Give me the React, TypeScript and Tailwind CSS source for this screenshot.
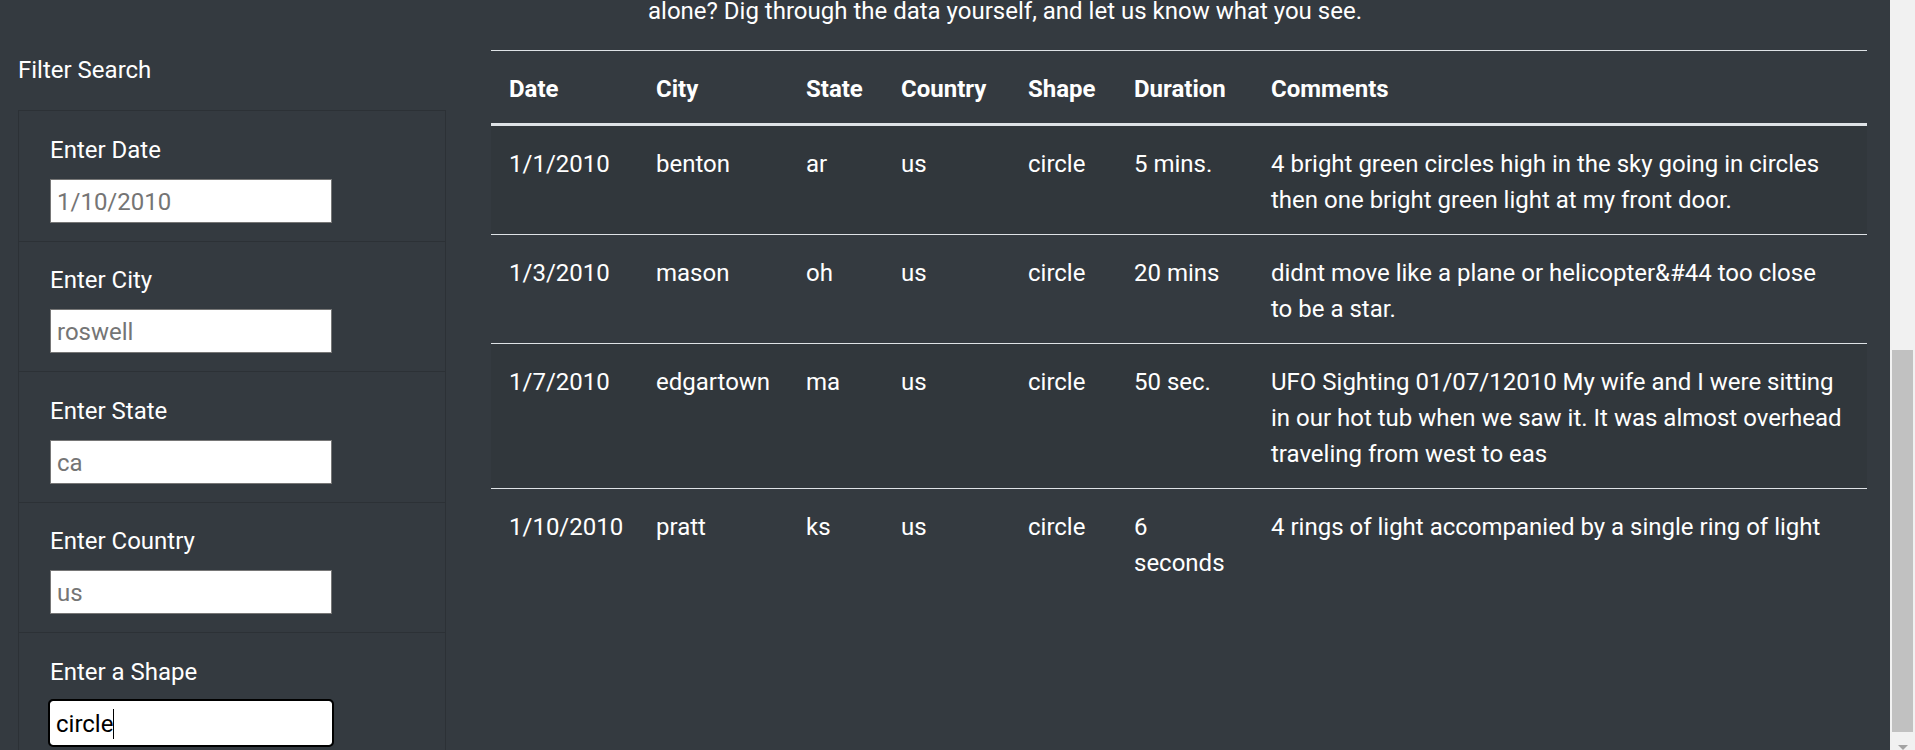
import React from 'react';

interface Sighting {
    date: string;
    city: string;
    state: string;
    country: string;
    shape: string;
    duration: string;
    comments: string;
}

const sightings: Sighting[] = [
    { date: '1/1/2010', city: 'benton', state: 'ar', country: 'us', shape: 'circle', duration: '5 mins.', comments: '4 bright green circles high in the sky going in circles then one bright green light at my front door.' },
    { date: '1/3/2010', city: 'mason', state: 'oh', country: 'us', shape: 'circle', duration: '20 mins', comments: 'didnt move like a plane or helicopter&#44 too close to be a star.' },
    { date: '1/7/2010', city: 'edgartown', state: 'ma', country: 'us', shape: 'circle', duration: '50 sec.', comments: 'UFO Sighting 01/07/12010 My wife and I were sitting in our hot tub when we saw it. It was almost overhead traveling from west to eas' },
    { date: '1/10/2010', city: 'pratt', state: 'ks', country: 'us', shape: 'circle', duration: '6 seconds', comments: '4 rings of light accompanied by a single ring of light' },
];

const filters = [
    { label: 'Enter Date', placeholder: '1/10/2010' },
    { label: 'Enter City', placeholder: 'roswell' },
    { label: 'Enter State', placeholder: 'ca' },
    { label: 'Enter Country', placeholder: 'us' },
];

const headers = ['Date', 'City', 'State', 'Country', 'Shape', 'Duration', 'Comments'];

export default function App() {
    return (
        <div className="flex h-[750px] w-full overflow-hidden bg-[#343a40] text-white text-[24px] leading-[36px] font-['Roboto','Liberation_Sans',sans-serif]">
            <div className="flex-1 min-w-0">
                {/* tail of the intro paragraph, page is scrolled */}
                <p className="-mt-[7px] pl-[648px]">alone? Dig through the data yourself, and let us know what you see.</p>

                <div className="mt-[21px] flex">
                    {/* Filters */}
                    <aside className="w-[491px] shrink-0 pl-[18px]">
                        <h5 className="pt-[2px] mb-[22px]">Filter Search</h5>
                        <ul className="w-[428px] border border-[#2c3136] divide-y divide-[#2c3136]">
                            {filters.map((f) => (
                                <li key={f.label} className="px-[31px] pt-[20.5px] pb-[18px]">
                                    <label className="block mb-[11px]">{f.label}</label>
                                    <input
                                        type="text"
                                        placeholder={f.placeholder}
                                        className="block h-[44px] w-[282px] bg-white border border-[#767676] px-[6px] pt-[2px] text-black placeholder:text-[#757575] outline-none"
                                    />
                                </li>
                            ))}
                            <li className="px-[31px] pt-[20.5px] pb-[18px]">
                                <label className="block mb-[11px]">Enter a Shape</label>
                                <div className="flex h-[44px] w-[282px] items-center rounded-[3px] border border-white bg-white px-[5px] pt-[2px] text-black outline-2 outline-black">
                                    <span>circle</span>
                                    <span className="h-[30px] w-px bg-black" />
                                </div>
                            </li>
                        </ul>
                    </aside>

                    {/* Results table */}
                    <div className="w-[1376px] shrink-0">
                        <table className="w-full table-fixed border-collapse text-left">
                            <colgroup>
                                <col className="w-[147px]" />
                                <col className="w-[150px]" />
                                <col className="w-[95px]" />
                                <col className="w-[127px]" />
                                <col className="w-[106px]" />
                                <col className="w-[137px]" />
                                <col />
                            </colgroup>
                            <thead>
                                <tr>
                                    {headers.map((h) => (
                                        <th key={h} className="border-t border-b-[3px] border-[#dee2e6] px-[18px] pt-[20px] pb-[16px] font-bold align-bottom">{h}</th>
                                    ))}
                                </tr>
                            </thead>
                            <tbody>
                                {sightings.map((s, i) => (
                                    <tr key={s.date} className={i % 2 === 0 ? 'bg-black/5' : ''}>
                                        <td className="border-t border-[#dee2e6] px-[18px] pt-[20px] pb-[16px] align-top whitespace-nowrap">{s.date}</td>
                                        <td className="border-t border-[#dee2e6] px-[18px] pt-[20px] pb-[16px] align-top whitespace-nowrap">{s.city}</td>
                                        <td className="border-t border-[#dee2e6] px-[18px] pt-[20px] pb-[16px] align-top">{s.state}</td>
                                        <td className="border-t border-[#dee2e6] px-[18px] pt-[20px] pb-[16px] align-top">{s.country}</td>
                                        <td className="border-t border-[#dee2e6] px-[18px] pt-[20px] pb-[16px] align-top">{s.shape}</td>
                                        <td className="border-t border-[#dee2e6] px-[18px] pt-[20px] pb-[16px] align-top">{s.duration}</td>
                                        <td className="border-t border-[#dee2e6] pl-[18px] pr-[24.6px] pt-[20px] pb-[16px] align-top">{s.comments}</td>
                                    </tr>
                                ))}
                            </tbody>
                        </table>
                    </div>
                </div>
            </div>

            {/* browser scrollbar */}
            <div className="flex w-[25px] shrink-0 flex-col items-center bg-[#f1f1f1]">
                <div className="mt-[350px] h-[384px] w-[21px] bg-[#c1c1c1]" />
                <div className="mt-[13px] h-0 w-0 border-x-[5px] border-t-[5px] border-x-transparent border-t-[#a3a3a3]" />
            </div>
        </div>
    );
}
